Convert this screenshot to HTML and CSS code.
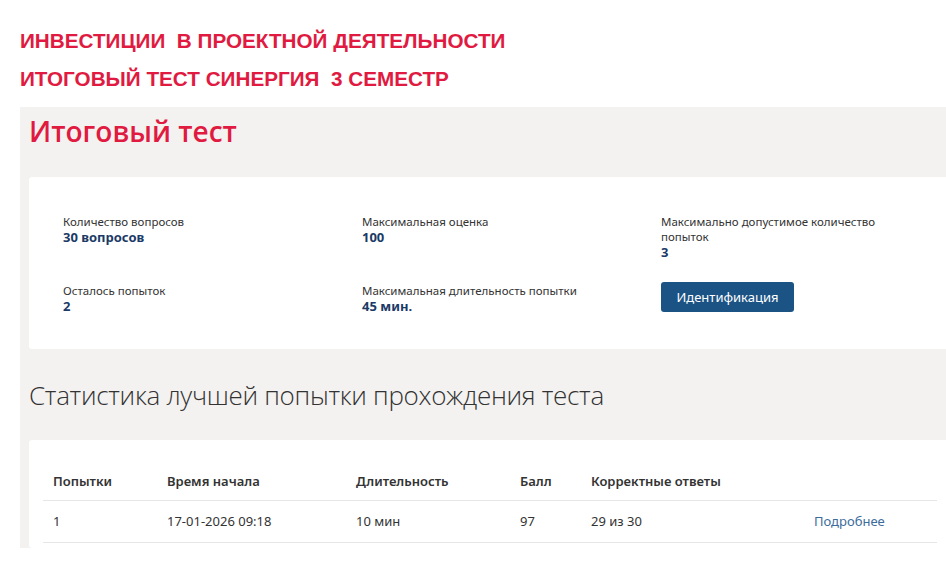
FILE: index.html
```html
<!DOCTYPE html>
<html lang="ru">
<head>
<meta charset="utf-8">
<link rel="stylesheet" href="styles.css">
</head>
<body>
<div class="banner">
  <div class="banner-line">ИНВЕСТИЦИИ&nbsp; В ПРОЕКТНОЙ ДЕЯТЕЛЬНОСТИ</div>
  <div class="banner-line">ИТОГОВЫЙ ТЕСТ СИНЕРГИЯ&nbsp; 3 СЕМЕСТР</div>
</div>
<div class="panel">
  <h1 class="page-title">Итоговый тест</h1>
  <div class="card info-card">
    <div class="info-grid">
      <div class="info-item">
        <div class="info-label">Количество вопросов</div>
        <div class="info-value">30 вопросов</div>
      </div>
      <div class="info-item">
        <div class="info-label">Максимальная оценка</div>
        <div class="info-value">100</div>
      </div>
      <div class="info-item">
        <div class="info-label">Максимально допустимое количество попыток</div>
        <div class="info-value">3</div>
      </div>
      <div class="info-item">
        <div class="info-label">Осталось попыток</div>
        <div class="info-value">2</div>
      </div>
      <div class="info-item">
        <div class="info-label">Максимальная длительность попытки</div>
        <div class="info-value">45 мин.</div>
      </div>
      <div class="info-item">
        <button class="btn">Идентификация</button>
      </div>
    </div>
  </div>
  <h2 class="section-title">Статистика лучшей попытки прохождения теста</h2>
  <div class="card table-card">
    <table class="stats">
      <thead>
        <tr>
          <th class="c1">Попытки</th>
          <th class="c2">Время начала</th>
          <th class="c3">Длительность</th>
          <th class="c4">Балл</th>
          <th class="c5">Корректные ответы</th>
          <th class="c6"></th>
        </tr>
      </thead>
      <tbody>
        <tr>
          <td>1</td>
          <td>17-01-2026 09:18</td>
          <td>10 мин</td>
          <td>97</td>
          <td>29 из 30</td>
          <td><a class="more" href="#">Подробнее</a></td>
        </tr>
      </tbody>
    </table>
  </div>
</div>
</body>
</html>
```

FILE: styles.css
```css
* { box-sizing: border-box; }
html, body { margin: 0; padding: 0; background: #fff; }
body { font-family: "Noto Sans", "Open Sans", sans-serif; color: #333; overflow: hidden; }

.banner { padding: 29px 0 0 20px; height: 107px; }
.banner-line {
  font-family: "Liberation Sans", Arial, sans-serif;
  font-weight: bold;
  font-size: 20.7px;
  line-height: 24px;
  color: #e01a40;
  margin-bottom: 14px;
}

.panel {
  margin-left: 20px;
  background: #f3f2f0;
  padding: 6px 0 6px 9px;
  height: 441px;
}
.page-title {
  font-family: "Open Sans", sans-serif;
  font-weight: 600;
  font-size: 28px;
  color: #e01a40;
  margin: 0;
  line-height: 36px;
  height: 64px;
}
.card { background: #fff; border-radius: 3px 0 0 3px; }

.info-card { padding: 37px 0 38px 34px; height: 172px; }
.info-grid {
  display: grid;
  grid-template-columns: 299px 299px 240px;
  row-gap: 22px;
}
.info-label { font-size: 11.5px; line-height: 15px; color: #333; }
.info-value { font-size: 13px; line-height: 17px; font-weight: bold; color: #1b3a66; }
.btn {
  font-family: "Noto Sans", sans-serif;
  background: #1c5385;
  color: #fff;
  border: 0;
  border-radius: 3px;
  font-size: 13px;
  height: 30px;
  width: 133px;
  padding: 0;
  margin-top: -1px;
}

.section-title {
  font-family: "Open Sans", sans-serif;
  font-weight: 300;
  font-size: 26px;
  margin: 0;
  height: 91px;
  padding-top: 31px;
  line-height: 30px;
  color: #333;
  letter-spacing: -0.3px;
}

.table-card { padding: 25px 0 0 14px; height: 108px; }
.stats { border-collapse: collapse; width: 894px; font-size: 13px; }
.stats th, .stats td { text-align: left; padding: 0 0 0 10px; }
.stats th { font-weight: 600; height: 35px; border-bottom: 1px solid #e6e6e6; color: #333; padding-bottom: 2px; }
.stats td { height: 42px; border-bottom: 1px solid #e6e6e6; color: #333; }
.c1 { width: 114px; }
.c2 { width: 189px; }
.c3 { width: 164px; }
.c4 { width: 71px; }
.c5 { width: 223px; }
.more { color: #3b6c9c; text-decoration: none; }
```
